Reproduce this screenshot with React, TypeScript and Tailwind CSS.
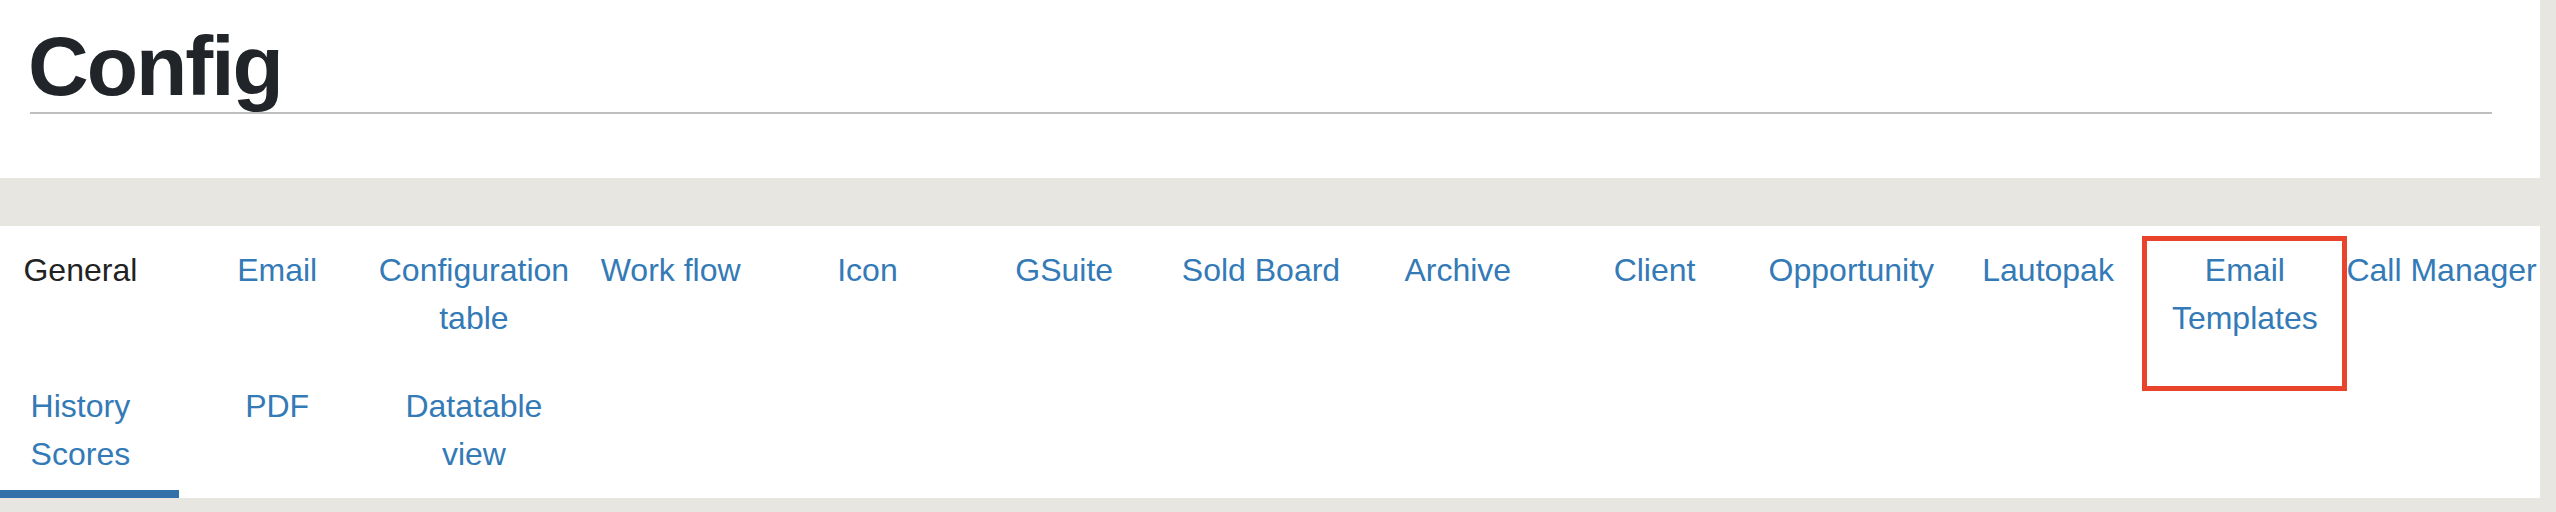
import React from 'react';

const TABS = [
  'General',
  'Email',
  'Configuration table',
  'Work flow',
  'Icon',
  'GSuite',
  'Sold Board',
  'Archive',
  'Client',
  'Opportunity',
  'Lautopak',
  'Email Templates',
  'Call Manager',
  'History Scores',
  'PDF',
  'Datatable view',
];

export default function App() {
  const active = 'General';
  const underlined = 'History Scores';
  const highlighted = 'Email Templates';

  return (
    <div className="min-h-[512px] w-[2556px] bg-[#e8e6e1] font-['Liberation_Sans',Arial,sans-serif]">
      {/* Page header */}
      <div className="h-[178px] w-[2540px] bg-white pl-[30px] pr-[48px] pt-[24px]">
        <h1 className="text-[84px] leading-none font-bold tracking-[-2px] text-[#212529] -ml-[2px]">Config</h1>
        <div className="mt-[4px] h-[2px] bg-[#bfbfbf]" />
      </div>

      {/* Tabs panel */}
      <div className="mt-[48px] w-[2540px] overflow-hidden bg-white">
        <div className="-ml-[18px] grid w-[calc(100%+18px)] grid-cols-[repeat(13,minmax(0,1fr))]">
          {TABS.map((t) => (
            <div
              key={t}
              className={`relative border-b-8 pt-5 pb-3 text-center text-[32px] leading-[48px] ${
                t === underlined ? 'border-[#3271a9]' : 'border-transparent'
              } ${t === active ? 'text-[#222222]' : 'text-[#337ab7]'}`}
            >
              {t}
              {t === highlighted && (
                <div className="pointer-events-none absolute left-[-4px] right-[-4px] top-[10px] h-[155px] border-[5px] border-[#e8432b]" />
              )}
            </div>
          ))}
        </div>
      </div>
    </div>
  );
}
